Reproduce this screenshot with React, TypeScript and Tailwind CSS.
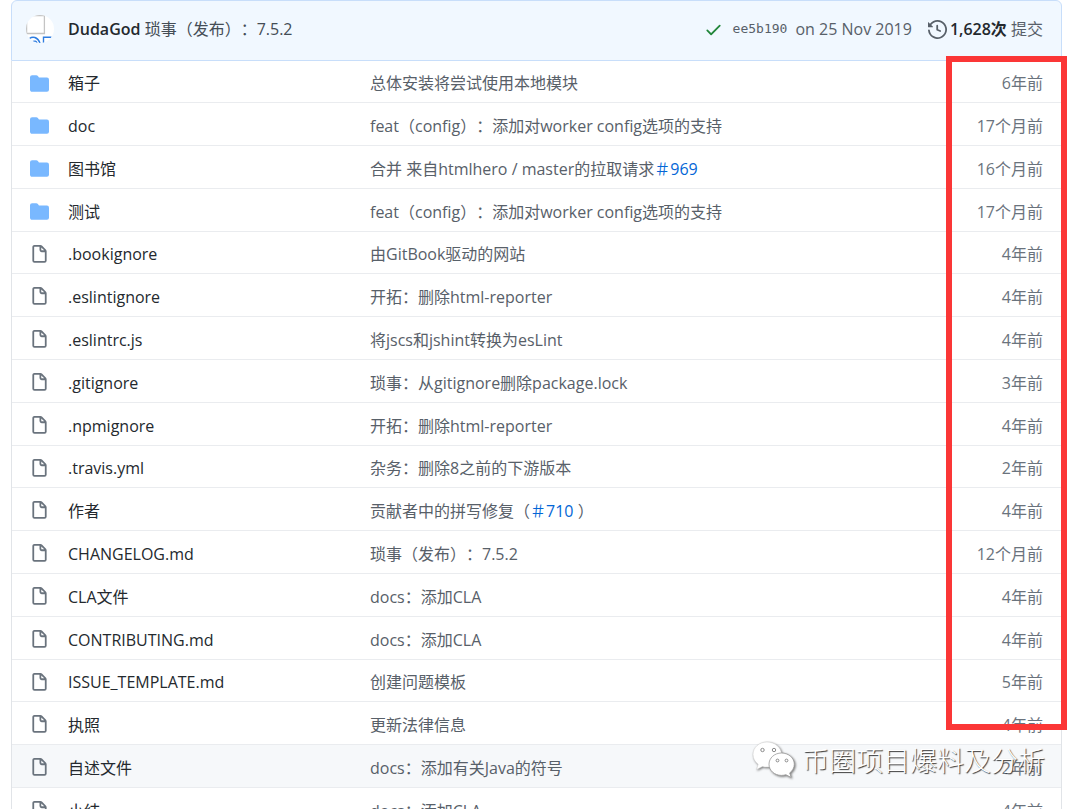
import type { ReactNode } from "react";

type Entry = {
  kind: "folder" | "file";
  name: string;
  message: ReactNode;
  age: string;
  active?: boolean;
};

function IssueLink({ id }: { id: number }) {
  return (
    <a href={`#issue-${id}`} className="text-[#0366d6]">
      ＃{id}
    </a>
  );
}

const workerConfig = "feat（config）：添加对worker config选项的支持";

const entries: Entry[] = [
  { kind: "folder", name: "箱子", message: "总体安装将尝试使用本地模块", age: "6年前" },
  { kind: "folder", name: "doc", message: workerConfig, age: "17个月前" },
  {
    kind: "folder",
    name: "图书馆",
    message: (
      <>
        合并 来自htmlhero / master的拉取请求
        <IssueLink id={969} />
      </>
    ),
    age: "16个月前",
  },
  { kind: "folder", name: "测试", message: workerConfig, age: "17个月前" },
  { kind: "file", name: ".bookignore", message: "由GitBook驱动的网站", age: "4年前" },
  { kind: "file", name: ".eslintignore", message: "开拓：删除html-reporter", age: "4年前" },
  { kind: "file", name: ".eslintrc.js", message: "将jscs和jshint转换为esLint", age: "4年前" },
  { kind: "file", name: ".gitignore", message: "琐事：从gitignore删除package.lock", age: "3年前" },
  { kind: "file", name: ".npmignore", message: "开拓：删除html-reporter", age: "4年前" },
  { kind: "file", name: ".travis.yml", message: "杂务：删除8之前的下游版本", age: "2年前" },
  {
    kind: "file",
    name: "作者",
    message: (
      <>
        贡献者中的拼写修复（
        <IssueLink id={710} /> ）
      </>
    ),
    age: "4年前",
  },
  { kind: "file", name: "CHANGELOG.md", message: "琐事（发布）：7.5.2", age: "12个月前" },
  { kind: "file", name: "CLA文件", message: "docs：添加CLA", age: "4年前" },
  { kind: "file", name: "CONTRIBUTING.md", message: "docs：添加CLA", age: "4年前" },
  { kind: "file", name: "ISSUE_TEMPLATE.md", message: "创建问题模板", age: "5年前" },
  { kind: "file", name: "执照", message: "更新法律信息", age: "4年前" },
  { kind: "file", name: "自述文件", message: "docs：添加有关Java的符号", age: "2年前", active: true },
  { kind: "file", name: "小结", message: "docs：添加CLA", age: "4年前" },
];

const iconPaths = {
  folder:
    "M1.75 1A1.75 1.75 0 000 2.75v10.5C0 14.216.784 15 1.75 15h12.5A1.75 1.75 0 0016 13.25v-8.5A1.75 1.75 0 0014.25 3h-6.5a.25.25 0 01-.2-.1l-.9-1.2c-.33-.44-.85-.7-1.4-.7h-3.5z",
  file: "M3.75 1.5a.25.25 0 00-.25.25v11.5c0 .138.112.25.25.25h8.5a.25.25 0 00.25-.25V6H9.75A1.75 1.75 0 018 4.25V1.5H3.75zm5.75.56v2.19c0 .138.112.25.25.25h2.19L9.5 2.06zM2 1.75C2 .784 2.784 0 3.75 0h5.086c.464 0 .909.184 1.237.513l3.414 3.414c.329.328.513.773.513 1.237v8.086A1.75 1.75 0 0112.25 15h-8.5A1.75 1.75 0 012 13.25V1.75z",
  check:
    "M13.78 4.22a.75.75 0 010 1.06l-7.25 7.25a.75.75 0 01-1.06 0L2.22 9.28a.75.75 0 011.06-1.06L6 10.94l6.72-6.72a.75.75 0 011.06 0z",
  history:
    "M1.643 3.143L.427 1.927A.25.25 0 000 2.104V5.75c0 .138.112.25.25.25h3.646a.25.25 0 00.177-.427L2.715 4.215a6.5 6.5 0 11-1.18 4.458.75.75 0 10-1.493.154 8.001 8.001 0 101.6-5.684zM7.75 4a.75.75 0 01.75.75v2.992l2.028.812a.75.75 0 01-.557 1.392l-2.5-1A.75.75 0 017 8.25v-3.5A.75.75 0 017.75 4z",
};

function Icon({ name, className }: { name: keyof typeof iconPaths; className: string }) {
  return (
    <svg viewBox="0 0 16 16" fill="currentColor" aria-hidden="true" className={`size-[19px] shrink-0 ${className}`}>
      <path fillRule="evenodd" d={iconPaths[name]} />
    </svg>
  );
}

function Avatar() {
  return (
    <svg viewBox="0 0 28 28" className="size-7 shrink-0" aria-hidden="true">
      <defs>
        <clipPath id="avatar-circle">
          <circle cx="14" cy="14" r="14" />
        </clipPath>
      </defs>
      <g clipPath="url(#avatar-circle)">
        <rect width="28" height="28" fill="#fff" />
        <path d="M.6 0v18.5h17.8V.6H0" fill="none" stroke="#c4c4c4" strokeWidth="1.3" />
        <path d="M3.500 23.500c3-2.300 8-1.800 10.500 4.500M7 26.500c1.800-.8 3.200-.5 4 1.500M17.500 28v-5.800h8" fill="none" stroke="#2f7de0" strokeWidth="1.400" />
      </g>
    </svg>
  );
}

function CommitBar() {
  return (
    <header className="flex h-[61px] items-center rounded-t-md border border-[#c8defa] bg-[#f1f8ff] pr-[18px] pb-[3px] pl-3.5 text-[#586069]">
      <Avatar />
      <p className="ml-3.5 flex-1 text-[#444d56]">
        <a href="#author" className="font-semibold text-[#24292e]">
          DudaGod
        </a>{" "}
        <a href="#commit">琐事（发布）：7.5.2</a>
      </p>
      <Icon name="check" className="text-[#22863a]" />
      <a href="#ee5b190" className="ml-2.5 font-['DejaVu_Sans_Mono','Liberation_Mono',monospace] text-[13px]">
        ee5b190
      </a>
      <span className="ml-2">on 25 Nov 2019</span>
      <a href="#commits" className="ml-4 flex items-center gap-[3px]">
        <Icon name="history" className="text-[#586069]" />
        <span>
          <strong className="font-semibold text-[#24292e]">1,628次</strong> 提交
        </span>
      </a>
    </header>
  );
}

function Watermark() {
  return (
    <div className="pointer-events-none absolute top-[739px] right-[35px] flex items-start gap-[6px] text-[27px] leading-[44px] font-light text-white [text-shadow:1px_1px_1px_#333]">
      <svg viewBox="0 0 44 38" className="mt-0.5 h-[38px] w-11 drop-shadow-[1px_1px_1px_#777]" aria-hidden="true">
        <g fill="#fff" stroke="#cfcfcf" strokeWidth=".5">
          <path d="M15 1C7 1 1 6.500 1 13.500c0 4 2 7.500 5.200 9.800L4.500 28.500l6-3c6 2 19-1 19-12C29.500 6.500 23 1 15 1z" />
          <path
            d="M29.500 12C22.500 12 17 17 17 23.200s5.500 11.200 12.500 11.200c1.500 0 3-.3 4.400-.7l5.200 2.700-1.400-4.500c2.800-2 4.600-5.200 4.600-8.700C42.300 17 36.500 12 29.500 12z"
            stroke="#999"
            strokeWidth=".8"
          />
        </g>
        <g fill="#fff" stroke="#8a8a8a" strokeWidth="1">
          <circle cx="10.500" cy="9" r="1.700" />
          <circle cx="22" cy="9" r="1.700" />
          <circle cx="25.500" cy="19.500" r="1.400" />
          <circle cx="34.500" cy="19.500" r="1.400" />
        </g>
      </svg>
      <span>币圈项目爆料及分析</span>
    </div>
  );
}

export default function App() {
  return (
    <main
      lang="zh-CN"
      className="relative h-screen overflow-hidden bg-white pr-[18px] pl-[11px] font-['Open_Sans','Noto_Sans_CJK_SC',sans-serif] text-[16px] leading-6 [text-spacing-trim:space-all]"
    >
      <CommitBar />
      <table className="w-full table-fixed border-separate border-spacing-0 border-x border-[#e1e4e8]">
        <colgroup>
          <col className="w-[56px]" />
          <col className="w-[302px]" />
          <col />
          <col className="w-[120px]" />
        </colgroup>
        <tbody>
          {entries.map((entry) => (
            <tr
              key={entry.name}
              className={`h-[43px] first:h-[41px] nth-[5n]:h-[42px] [&>td]:border-t [&>td]:border-[#eaecef] first:[&>td]:border-t-0 ${entry.active ? "bg-[#f6f8fa]" : ""}`}
            >
              <td className="p-0 pt-[3px] pl-[18px]">
                <Icon name={entry.kind} className={entry.kind === "folder" ? "text-[#79b8ff]" : "text-[#6a737d]"} />
              </td>
              <td className="p-0 pt-[3px] text-[#24292e]">
                <a href={`#${entry.name}`}>{entry.name}</a>
              </td>
              <td className="p-0 pt-[3px] whitespace-nowrap text-[#586069]">{entry.message}</td>
              <td className="p-0 pt-[3px] pr-[18px] text-right text-[#6a737d]">{entry.age}</td>
            </tr>
          ))}
        </tbody>
      </table>
      <div className="pointer-events-none absolute top-14 right-[13px] h-[674px] w-[121px] border-[6px] border-[#fb3636]" />
      <Watermark />
    </main>
  );
}
